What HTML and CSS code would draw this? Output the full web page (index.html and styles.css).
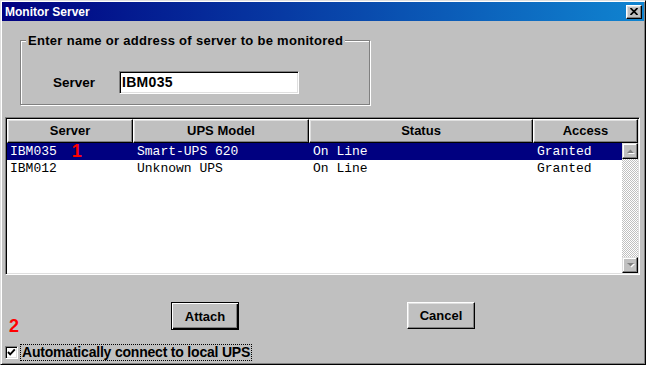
FILE: index.html
```html
<!DOCTYPE html>
<html>

<head>
    <meta charset="utf-8">
    <title>Monitor Server</title>
    <link rel="stylesheet" href="styles.css">
</head>

<body>
    <div class="window">
        <div class="titlebar">
            <span class="title">Monitor Server</span>
            <button class="close">
                <svg width="8" height="7" viewBox="0 0 8 7">
                    <path d="M0.5 0 L7.5 7 M7.5 0 L0.5 7" stroke="#000" stroke-width="1.7" fill="none" />
                </svg>
            </button>
        </div>
        <div class="client">
            <div class="group">
                <span class="legend">Enter name or address of server to be monitored</span>
                <div class="server-row">
                    <label>Server</label>
                    <div class="textbox">IBM035</div>
                </div>
            </div>

            <div class="listview">
                <div class="lv-header">
                    <div class="hcell c1">Server</div>
                    <div class="hcell c2">UPS Model</div>
                    <div class="hcell c3">Status</div>
                    <div class="hcell c4">Access</div>
                </div>
                <div class="lv-body">
                    <div class="rows">
                        <div class="row selected">
                            <span class="cell c1">IBM035<span class="mark">1</span></span>
                            <span class="cell c2">Smart-UPS 620</span>
                            <span class="cell c3">On Line</span>
                            <span class="cell c4">Granted</span>
                        </div>
                        <div class="row">
                            <span class="cell c1">IBM012</span>
                            <span class="cell c2">Unknown UPS</span>
                            <span class="cell c3">On Line</span>
                            <span class="cell c4">Granted</span>
                        </div>
                    </div>
                    <div class="scrollbar">
                        <div class="sb-btn">
                            <svg width="9" height="6" viewBox="0 0 9 6">
                                <path d="M1 5 L8 5 L4.5 1.5 Z" fill="#fff" transform="translate(1 1)" />
                                <path d="M1 5 L8 5 L4.5 1.5 Z" fill="#808080" />
                            </svg>
                        </div>
                        <div class="sb-track"></div>
                        <div class="sb-btn">
                            <svg width="9" height="6" viewBox="0 0 9 6">
                                <path d="M1 1 L8 1 L4.5 4.5 Z" fill="#fff" transform="translate(1 1)" />
                                <path d="M1 1 L8 1 L4.5 4.5 Z" fill="#808080" />
                            </svg>
                        </div>
                    </div>
                </div>
            </div>

            <div class="actions">
                <button class="btn default">Attach</button>
                <button class="btn cancel">Cancel</button>
            </div>

            <div class="check-row">
                <span class="checkbox">
                    <svg width="9" height="9" viewBox="0 0 9 9">
                        <path d="M1 4 L3.2 6.4 L7.8 1.4" stroke="#000" stroke-width="1.9" fill="none" />
                    </svg>
                </span>
                <span class="check-label">Automatically connect to local UPS</span>
            </div>
        </div>
        <span class="mark mark-2">2</span>
    </div>
</body>

</html>
```

FILE: styles.css
```css
* {
    box-sizing: border-box;
}

body {
    margin: 0;
    font-family: "Liberation Sans", Arial, sans-serif;
    font-size: 13px;
    font-weight: bold;
}

.window {
    position: relative;
    width: 646px;
    height: 365px;
    padding: 1px;
    background: #c0c0c0;
    border: 1px solid;
    border-color: #dfdfdf #000 #000 #dfdfdf;
    box-shadow: inset 1px 1px #fff, inset -1px -1px #808080;
}

/* title bar */
.titlebar {
    height: 19px;
    display: flex;
    align-items: center;
    justify-content: space-between;
    padding: 0 2px 0 3px;
    background: linear-gradient(90deg, #000080, #1084d0);
}

.title {
    color: #fff;
    font-size: 12px;
}

.close {
    width: 16px;
    height: 14px;
    padding: 0;
    display: flex;
    align-items: center;
    justify-content: center;
    background: #c0c0c0;
    border: 1px solid;
    border-color: #fff #000 #000 #fff;
    box-shadow: inset -1px -1px #808080, inset 1px 1px #dfdfdf;
}

.client {
    padding-left: 3px;
}

/* group box */
.group {
    width: 350px;
    height: 65px;
    margin: 19px 0 0 15px;
    border: 1px solid #808080;
    box-shadow: inset 1px 1px #fff, 1px 1px #fff;
}

.legend {
    display: block;
    width: fit-content;
    margin: -8px 0 0 5px;
    padding: 0 2px;
    line-height: 16px;
    letter-spacing: 0.3px;
    background: #c0c0c0;
    color: #000;
}

.server-row {
    display: flex;
    align-items: center;
    margin-top: 22px;
    padding-left: 32px;
}

.server-row label {
    width: 66px;
    font-size: 13.5px;
}

.textbox {
    width: 180px;
    height: 23px;
    line-height: 19px;
    font-size: 14px;
    letter-spacing: 0.3px;
    background: #fff;
    border: 1px solid;
    border-color: #808080 #fff #fff #808080;
    box-shadow: inset 1px 1px #000, inset -1px -1px #dfdfdf;
    padding: 1px 0 0 2px;
}

/* list view */
.listview {
    width: 635px;
    height: 158px;
    margin-top: 12px;
    padding: 1px;
    background: #fff;
    border: 1px solid;
    border-color: #808080 #fff #fff #808080;
    box-shadow: inset 1px 1px #000, inset -1px -1px #dfdfdf;
}

.lv-header {
    display: flex;
    height: 24px;
}

.hcell {
    height: 24px;
    line-height: 21px;
    text-align: center;
    background: #c0c0c0;
    border: 1px solid;
    border-color: #fff #000 #000 #fff;
    box-shadow: inset -1px -1px #808080, inset 1px 1px #dfdfdf;
}

.c1 {
    width: 126px;
}

.c2 {
    width: 176px;
}

.c3 {
    width: 224px;
}

.c4 {
    width: 105px;
}

.lv-body {
    display: flex;
    height: 130px;
}

.rows {
    flex: 1;
}

.row {
    display: flex;
    height: 17px;
    line-height: 17px;
    font-family: "Liberation Mono", "Courier New", monospace;
    font-weight: normal;
    font-size: 13px;
    color: #000;
    white-space: pre;
}

.row.selected {
    background: #000080;
    color: #fff;
}

.cell {
    padding-left: 4px;
}

.cell.c1 {
    padding-left: 3px;
}

.cell.c4 {
    width: auto;
}

.mark {
    color: #ff0000;
    font-family: "Liberation Sans", Arial, sans-serif;
    font-weight: bold;
    font-size: 18px;
    line-height: 17px;
    vertical-align: top;
    margin-left: 15px;
}

.mark-2 {
    position: absolute;
    left: 8px;
    top: 317px;
    margin: 0;
}

.scrollbar {
    width: 16px;
    display: flex;
    flex-direction: column;
}

.sb-btn {
    width: 16px;
    height: 16px;
    display: flex;
    align-items: center;
    justify-content: center;
    background: #c0c0c0;
    border: 1px solid;
    border-color: #dfdfdf #000 #000 #dfdfdf;
    box-shadow: inset -1px -1px #808080, inset 1px 1px #fff;
}

.sb-track {
    flex: 1;
    background: repeating-conic-gradient(#c0c0c0 0 25%, #fff 0 50%) 0 0 / 2px 2px;
}

/* buttons */
.actions {
    display: flex;
    gap: 168px;
    margin-top: 27px;
    padding-left: 166px;
}

.btn {
    width: 68px;
    height: 28px;
    padding: 0;
    font-family: "Liberation Sans", Arial, sans-serif;
    font-size: 13px;
    font-weight: bold;
    color: #000;
    background: #c0c0c0;
    border: 1px solid;
    border-color: #fff #000 #000 #fff;
    box-shadow: inset -1px -1px #808080, inset 1px 1px #dfdfdf;
}

.btn.default {
    border: 1px solid #000;
    box-shadow: inset 1px 1px #fff, inset -1px -1px #000, inset -2px -2px #808080;
}

.btn.cancel {
    height: 27px;
}

/* checkbox */
.check-row {
    display: flex;
    align-items: center;
    margin-top: 14px;
}

.checkbox {
    width: 13px;
    height: 13px;
    display: flex;
    align-items: center;
    justify-content: center;
    background: #fff;
    border: 1px solid;
    border-color: #808080 #fff #fff #808080;
    box-shadow: inset 1px 1px #000, inset -1px -1px #dfdfdf;
}

.check-label {
    margin-left: 2px;
    padding: 0 1px;
    line-height: 15px;
    font-size: 14px;
    letter-spacing: -0.2px;
    border: 1px dotted #000;
}
```
